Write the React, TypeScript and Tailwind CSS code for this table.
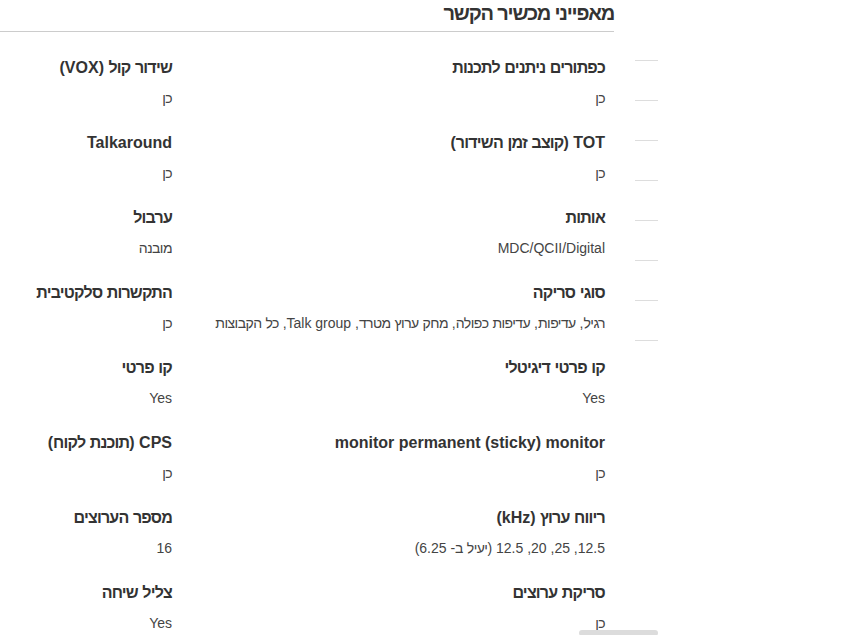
const rows: [string, string, string, string][] = [
  ["כפתורים ניתנים לתכנות", "כן", "שידור קול (VOX)", "כן"],
  ["TOT (קוצב זמן השידור)", "כן", "Talkaround", "כן"],
  ["אותות", "MDC/QCII/Digital", "ערבול", "מובנה"],
  ["סוגי סריקה", "רגיל, עדיפות, עדיפות כפולה, מחק ערוץ מטרד, Talk group, כל הקבוצות", "התקשרות סלקטיבית", "כן"],
  ["קו פרטי דיגיטלי", "Yes", "קו פרטי", "Yes"],
  ["monitor permanent (sticky) monitor", "כן", "CPS (תוכנת לקוח)", "כן"],
  ["ריווח ערוץ (kHz)", "12.5, 25, 20, 12.5 (יעיל ב- 6.25)", "מספר הערוצים", "16"],
  ["סריקת ערוצים", "כן", "צליל שיחה", "Yes"],
];

// Liberation's Hebrew glyphs run wider than Arial's, so tighten only the Hebrew words
const Heb = ({ text, tight }: { text: string; tight: string }) => (
  <>
    {text.split(/([\u0590-\u05FF]+)/).map((part, i) =>
      /[\u0590-\u05FF]/.test(part) ? (
        <span key={i} className={tight}>
          {part}
        </span>
      ) : (
        part
      )
    )}
  </>
);

const Spec = ({ label, value }: { label: string; value: string }) => (
  <div className="mb-[25px]">
    <div className="h-5 text-[16px] leading-5 font-bold text-[#333] whitespace-nowrap">
      <Heb text={label} tight="tracking-[-0.05em]" />
    </div>
    <div className="mt-[10px] h-5 text-[14px] leading-5 text-[#444] whitespace-nowrap">
      <Heb text={value} tight="tracking-[-0.04em]" />
    </div>
  </div>
);

export default function App() {
  return (
    <div
      className="relative flex min-h-[635px] bg-white"
      style={{ fontFamily: '"Liberation Sans", Arial, sans-serif' }}
    >
      <div dir="rtl" className="w-[614px] shrink-0">
        <h2 className="h-[32px] border-b border-[#ccc] text-[20px] leading-[27px] font-bold text-[#333] tracking-[-0.06em]">
          מאפייני מכשיר הקשר
        </h2>
        <div className="grid grid-cols-[433px_172px] pt-[26px] pr-[9px]">
          {rows.map((r, i) => (
            <div key={i} className="contents">
              <Spec label={r[0]} value={r[1]} />
              <Spec label={r[2]} value={r[3]} />
            </div>
          ))}
        </div>
      </div>
      <div className="ml-[21px] flex w-[23px] flex-col gap-[39px] pt-[60px]">
        {Array.from({ length: 8 }).map((_, i) => (
          <div key={i} className="h-px bg-[#ddd]" />
        ))}
      </div>
      <div className="absolute left-[579px] top-[630px] h-[6px] w-[79px] rounded-sm bg-[#dcdcdc]" />
    </div>
  );
}
